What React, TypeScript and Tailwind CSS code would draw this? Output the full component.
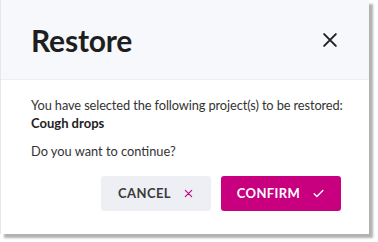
import React from "react";

const XIcon = ({ className }: { className?: string }) => (
  <svg viewBox="0 0 24 24" fill="none" stroke="currentColor" strokeWidth={2.4} strokeLinecap="round" className={className}>
    <path d="M5 5l14 14M19 5L5 19" />
  </svg>
);

const CheckIcon = ({ className }: { className?: string }) => (
  <svg viewBox="0 0 24 24" fill="none" stroke="currentColor" strokeWidth={2.6} strokeLinecap="round" strokeLinejoin="round" className={className}>
    <path d="M4 12.5l5 5L20 6.5" />
  </svg>
);

export default function App() {
  return (
    <div className="w-[378px] h-[242px] bg-white font-['Lato',sans-serif]">
      <div className="w-[369px] h-[234px] bg-white border-l border-[#e6e7ec] shadow-[4px_4px_2px_rgba(0,0,0,0.3)] flex flex-col">
        <div className="h-[80px] bg-[#f7f8fc] border-b border-[#eceef3] flex items-center justify-between pl-[30px] pr-[29px]">
          <h1 className="text-[30px] font-bold text-[#1e1e1e] tracking-[-0.2px] pt-[1px]">Restore</h1>
          <XIcon className="w-[20px] h-[20px] text-[#222]" />
        </div>
        <div className="flex-1 flex flex-col pl-[30px] pr-[28px] pt-[16px]">
          <p className="text-[12.8px] leading-[18px] text-[#333] whitespace-nowrap tracking-[-0.1px]">
            You have selected the following project(s) to be restored:
          </p>
          <p className="text-[13px] leading-[18px] font-bold text-[#222]">Cough drops</p>
          <p className="text-[12.8px] leading-[18px] text-[#333] mt-[10px]">Do you want to continue?</p>
          <div className="flex justify-end gap-[10px] mt-[16px]">
            <button className="h-[35px] w-[110px] rounded-[3px] bg-[#eeeff4] flex items-center justify-center gap-[12px] text-[13px] font-bold tracking-[0.4px] text-[#3a3a3a]">
              CANCEL
              <XIcon className="w-[11px] h-[11px] text-[#c4007d]" />
            </button>
            <button className="h-[35px] w-[120px] rounded-[3px] bg-[#c8007f] flex items-center justify-center gap-[12px] text-[13px] font-bold tracking-[0.4px] text-white">
              CONFIRM
              <CheckIcon className="w-[13px] h-[13px] text-white" />
            </button>
          </div>
        </div>
      </div>
    </div>
  );
}
